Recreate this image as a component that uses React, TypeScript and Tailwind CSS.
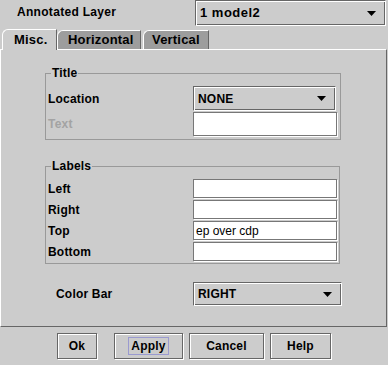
import React from "react";

const Arrow = () => (
  <svg width="9" height="5" viewBox="0 0 9 5" className="shrink-0">
    <polygon points="0,0 9,0 4.5,5" fill="#000" />
  </svg>
);

const Combo: React.FC<{ value: string; className?: string }> = ({ value, className }) => (
  <div
    className={
      "flex items-center justify-between border border-t-[#666] border-l-[#666] border-b-white border-r-white bg-[#cccccc] shadow-[inset_1px_1px_0_white,inset_-1px_-1px_0_#666] pl-[4px] pr-[9px] " +
      (className ?? "")
    }
  >
    <span className="font-bold">{value}</span>
    <Arrow />
  </div>
);

const Field: React.FC<{ value?: string; className?: string }> = ({ value, className }) => (
  <div
    className={
      "flex items-center border border-[#777] bg-white pl-[2px] font-normal tracking-normal shadow-[1px_1px_0_white] " +
      (className ?? "")
    }
  >
    {value}
  </div>
);

const Button: React.FC<{ label: string; focus?: boolean; className?: string }> = ({ label, focus, className }) => (
  <div
    className={
      "flex h-[26px] items-center justify-center border border-[#666] bg-[#cccccc] shadow-[inset_1px_1px_0_white,1px_1px_0_white] " +
      (className ?? "")
    }
  >
    <span className={focus ? "border border-[#9a9ad0] px-[2px] leading-[16px]" : "leading-[16px]"}>{label}</span>
  </div>
);

export default function App() {
  return (
    <div
      className="h-[365px] w-[388px] overflow-hidden bg-[#cccccc] text-[12px] font-bold tracking-[0.2px] text-black"
      style={{ fontFamily: '"Liberation Sans", Arial, sans-serif' }}
    >
      {/* header */}
      <div className="flex h-[29px] items-start">
        <div className="w-[195px] pl-[17px] pt-[5px] leading-[14px] tracking-[0.3px]">Annotated Layer</div>
        <Combo value="1 model2" className="h-[26px] w-[191px] text-[13px] tracking-[0.5px]" />
      </div>

      {/* tabs */}
      <div className="flex h-[21px] items-end pl-[2px]">
        <div className="relative z-10 flex h-[21px] w-[55px] items-center rounded-tl-[6px] border-l border-t border-r border-l-white border-t-white border-r-[#666] bg-[#cccccc] pl-[11px] text-[13px]">
          Misc.
        </div>
        <div className="mb-[1px] flex h-[19px] w-[84px] items-center rounded-tl-[6px] border-l border-t border-r border-l-white border-t-white border-r-[#666] bg-[#9d9d9d] pl-[10px] text-[13px]">
          Horizontal
        </div>
        <div className="mb-[1px] ml-[2px] flex h-[19px] w-[66px] items-center rounded-tl-[6px] border-l border-t border-r border-l-white border-t-white border-r-[#666] bg-[#9d9d9d] pl-[8px] text-[13px]">
          Vertical
        </div>
      </div>

      {/* panel */}
      <div className="-mt-[1px] h-[278px] w-[387px] border border-t-white border-l-white border-r-[#666] border-b-[#666]">
        <fieldset className="ml-[44px] mt-[16px] w-[296px] border border-[#999] pb-[3px] pl-[2px]">
          <legend className="ml-[3px] px-[1px] leading-[14px]">Title</legend>
          <div className="mt-[6px] flex h-[25px] items-center">
            <div className="w-[145px]">Location</div>
            <Combo value="NONE" className="h-[25px] w-[143px]" />
          </div>
          <div className="mt-[1px] flex h-[24px] items-center">
            <div className="w-[145px] text-[#a3a3a3]">Text</div>
            <Field className="h-[24px] w-[144px]" />
          </div>
        </fieldset>

        <fieldset className="ml-[44px] mt-[19px] w-[295px] border border-[#999] pb-[2px] pl-[2px]">
          <legend className="ml-[3px] px-[1px] leading-[14px]">Labels</legend>
          <div className="mt-[6px] flex flex-col gap-[2px]">
            {[
              ["Left", ""],
              ["Right", ""],
              ["Top", "ep over cdp"],
              ["Bottom", ""],
            ].map(([label, value]) => (
              <div key={label} className="flex h-[19px] items-center">
                <div className="w-[145px]">{label}</div>
                <Field value={value} className="h-[19px] w-[144px]" />
              </div>
            ))}
          </div>
        </fieldset>

        <div className="mt-[18px] flex h-[24px] items-center">
          <div className="w-[192px] pl-[55px]">Color Bar</div>
          <Combo value="RIGHT" className="h-[24px] w-[149px]" />
        </div>
      </div>

      {/* buttons */}
      <div className="mt-[6px] flex pl-[57px]">
        <Button label="Ok" className="w-[40px]" />
        <Button label="Apply" focus className="ml-[17px] w-[69px]" />
        <Button label="Cancel" className="ml-[6px] w-[75px]" />
        <Button label="Help" className="ml-[6px] w-[61px]" />
      </div>
    </div>
  );
}
